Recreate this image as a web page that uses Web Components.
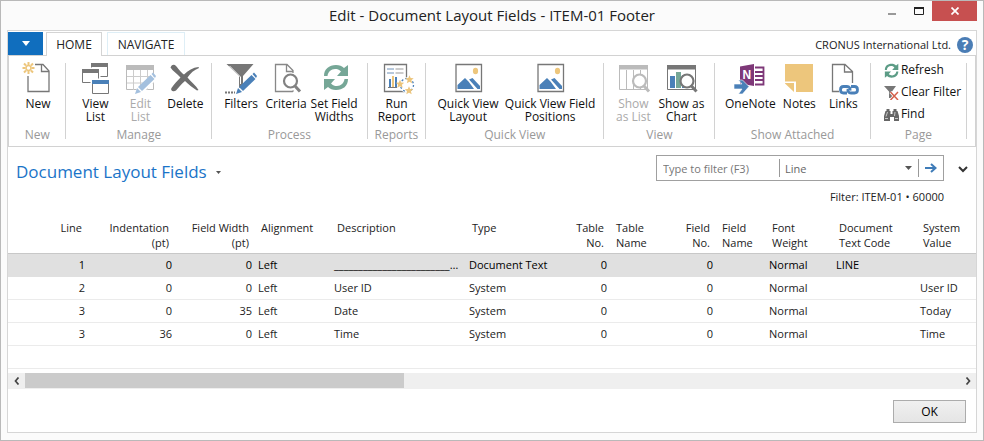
<!DOCTYPE html>
<html lang="en">
<head>
<meta charset="utf-8">
<title>Edit - Document Layout Fields - ITEM-01 Footer</title>
<style>
html, body { height: 100%; margin: 0; }
body { font: 11px/13px "Open Sans", "Noto Sans", sans-serif; color: #222; background: #fbfbfb; }
</style>
</head>
<body>
<app-window caption="Edit - Document Layout Fields - ITEM-01 Footer">
  <tab-strip company="CRONUS International Ltd."></tab-strip>
  <ribbon-bar>
    <ribbon-group label="New" style="--share:57">
      <ribbon-button icon="new" style="--w:48px">New</ribbon-button>
    </ribbon-group>
    <ribbon-group label="Manage" style="--share:146">
      <ribbon-button icon="view" style="--w:48px">View<br>List</ribbon-button>
      <ribbon-button icon="edit" disabled style="--w:42px">Edit<br>List</ribbon-button>
      <ribbon-button icon="delete" style="--w:48px">Delete</ribbon-button>
    </ribbon-group>
    <ribbon-group label="Process" style="--share:156">
      <ribbon-button icon="filters" style="--w:48px">Filters</ribbon-button>
      <ribbon-button icon="criteria" style="--w:42px">Criteria</ribbon-button>
      <ribbon-button icon="cycle" style="--w:54px">Set Field<br>Widths</ribbon-button>
    </ribbon-group>
    <ribbon-group label="Reports" style="--share:58">
      <ribbon-button icon="report" style="--w:48px">Run<br>Report</ribbon-button>
    </ribbon-group>
    <ribbon-group label="Quick View" style="--share:179">
      <ribbon-button icon="picture" style="--w:74px">Quick View<br>Layout</ribbon-button>
      <ribbon-button icon="picture" style="--w:90px">Quick View Field<br>Positions</ribbon-button>
    </ribbon-group>
    <ribbon-group label="View" style="--share:111">
      <ribbon-button icon="showlist" disabled style="--w:48px">Show<br>as List</ribbon-button>
      <ribbon-button icon="showchart" style="--w:48px">Show as<br>Chart</ribbon-button>
    </ribbon-group>
    <ribbon-group label="Show Attached" style="--share:156">
      <ribbon-button icon="onenote" style="--w:60px">OneNote</ribbon-button>
      <ribbon-button icon="notes" style="--w:38px">Notes</ribbon-button>
      <ribbon-button icon="links" style="--w:50px">Links</ribbon-button>
    </ribbon-group>
    <ribbon-group label="Page" stacked style="--share:96">
      <ribbon-link icon="refresh">Refresh</ribbon-link>
      <ribbon-link icon="clear">Clear Filter</ribbon-link>
      <ribbon-link icon="find">Find</ribbon-link>
    </ribbon-group>
  </ribbon-bar>
  <page-header heading="Document Layout Fields" filter="Filter: ITEM-01 • 60000"></page-header>
  <data-grid></data-grid>
  <scroll-track></scroll-track>
  <dialog-actions>OK</dialog-actions>
</app-window>

<script>
const PENCIL = (c) => `<path d="M11 33l2-6 4 4z" fill="${c}"/><path d="M14 26L26.500 14l4 4L18 30z" fill="${c}"/><path d="M27.500 13l1.500-1.500 3 3.500-1 2z" fill="${c}"/>`;
const LENS = (x, c) => `<circle cx="${x}" cy="20" r="6.500" fill="#fff" stroke="${c}" stroke-width="2.200"/><path d="M${x + 4.5} 25l5 5.500" stroke="${c}" stroke-width="3"/>`;
const CYCLE = `<path d="M6 15C6 8 11 4 18 4c3.500 0 6 1 8 3l4-3v11H19l4-4.500c-2-2-3.500-2.500-6-2.500-4 0-7 3-7.500 7z"/><path d="M30 18c0 7-5 11-12 11-3.500 0-6-1-8-3l-4 3V18h11l-4 4.500c2 2 3.500 2.500 6 2.500 4 0 7-3 7.500-7z"/>`;
const STAR = (x, y) => `<path transform="translate(${x} ${y})" d="M0-4.200l1.200 2.800 3 .2-2.300 2 .8 3L0 2.200l-2.700 1.600.8-3-2.300-2 3-.2z" fill="#ecc57c"/>`;
const ICONS = {
  new: `<path d="M13 3.500h8l6 6.500v20.500H6V15" fill="none" stroke="#777" stroke-width="1.300"/><path d="M19.500 4v6.500H27" fill="none" stroke="#777" stroke-width="1.300"/><g stroke="#edc67c" stroke-width="2"><path d="M6.500 1v3M6.500 10v3M.500 7h3M9.500 7h3M2 2.500l2 2M11 2.500l-2 2M2 11.500l2-2M11 11.500l-2-2"/></g><circle cx="6.500" cy="7" r="2.500" fill="#fff" stroke="#edc67c" stroke-width="1.500"/>`,
  view: `<g fill="#fff" stroke="#777"><path d="M12.500 2.500h16v13h-16z"/><path d="M3.500 8.500h16v13h-16z" stroke="#fff" stroke-width="4"/><path d="M3.500 8.500h16v13h-16z"/><path d="M13.500 19.500h16v13h-16z" stroke="#fff" stroke-width="4"/><path d="M13.500 19.500h16v13h-16z"/></g><path d="M12 2h17v4H12zM3 8h17v4H3z" fill="#777"/><path d="M13 19h17v4H13z" fill="#4a80b8"/>`,
  edit: `<path d="M2.500 4.500h27v24h-27z" fill="#fff" stroke="#bbb"/><path d="M2 4h28v5H2z" fill="#bbb"/><path d="M3 15.500h27M3 22h27M9.500 9v20M16.500 9v20M23.500 9v20" stroke="#ccc"/><path d="M14 32L30 16" stroke="#fff" stroke-width="7"/>${PENCIL('#a4c0de')}`,
  delete: `<path d="M1.500 6.500c1.500-3.500 4-3 5.500-1.500 3 3.500 6 7.500 8 8.500 4-4 9-7 14.500-7.500l.5 1C25 9 21.500 12 18.500 16.500c3.500 4.500 8.500 8 11 12.500l-1.500.5c-4.500-3-8.500-6-12-9.500-3.500 3-6.500 6.500-9 9.500-2.500 2-6 0-4.500-2.500 2.500-3.500 6-7.500 9-10.500C8 12.500 3.500 10 1.500 6.500z" fill="#6e6e6e"/>`,
  filters: `<path d="M1.500 3h27L18 15v9l-4 3V15z" fill="#777"/><path d="M4.500 5l11 11v7" fill="none" stroke="#fff"/><path d="M0 31.500h10" stroke="#777" stroke-width="2" stroke-dasharray="2 1"/><path d="M14 32L31 15" stroke="#fff" stroke-width="6"/>${PENCIL('#4a80b8')}`,
  criteria: `<path d="M23 12V9.500l-6-6H5.500v27h17l1-1M16.500 4v6.500h6" fill="none" stroke="#888" stroke-width="1.300"/>${LENS(20.5, '#828282')}`,
  cycle: `<g fill="#76a797">${CYCLE}</g>`,
  report: `<path d="M3.500 3.500h22v27h-22z" fill="#fff" stroke="#777" stroke-width="1.300"/><path d="M6 8h7M6 12h7" stroke="#6e91b8"/><path d="M14.500 8h8M14.500 12h8" stroke="#999"/><path d="M7 26.500h9" stroke="#777"/><path d="M8 18h2v8H8zM14 16h2v10h-2z" fill="#4a80b8"/><path d="M11 15h2v11h-2z" fill="#edc67c"/><circle cx="26.500" cy="24" r="8" fill="#fff"/><circle cx="26" cy="24" r="6.500" fill="none" stroke="#4a80b8" stroke-width="1.300" stroke-dasharray="2 2"/>${STAR(28.5, 18.5)}${STAR(19, 23)}${STAR(28, 29.5)}`,
  picture: `<path d="M4 3.500h25.500v27H4z" fill="#fff" stroke="#777" stroke-width="1.300"/><ellipse cx="23.500" cy="10" rx="2.600" ry="3.300" fill="#edc67c"/><path d="M5.500 28v-4l7.500-7 3.500 3.500L22 28zM17 18.500l3.500-1.500 7.500 8v3h-2.500z" fill="#4a80b8"/>`,
  showlist: `<path d="M2.500 4.500h28v24h-28z" fill="#fff" stroke="#bbb"/><path d="M2 4h29v4.500H2z" fill="#bbb"/><path d="M9.500 9v19M16.500 9v19M23.500 9v19" stroke="#bbb"/>${LENS(22.5, '#bbb')}`,
  showchart: `<path d="M2.500 4.500h28v24h-28z" fill="#fff" stroke="#777"/><path d="M2 4h29v4.500H2z" fill="#777"/><path d="M5 15h5v12H5z" fill="#4a80b8"/><path d="M11 11h5v16h-5z" fill="#76a797"/><path d="M17 14h5v13h-5z" fill="#4a80b8"/>${LENS(22, '#777')}`,
  onenote: `<path d="M6 5.500L20 3v22l-14-2.500z" fill="#7e3878"/><path d="M21 6.500h8.500v17H21M21 11h8M21 15h8M21 19h8" fill="none" stroke="#7e3878" stroke-width="1.800"/><text x="8.500" y="18" font-family="Liberation Sans,sans-serif" font-weight="700" font-size="12" fill="#fff">N</text><path d="M0 23h8l-3.500-4h4L15 25.500 8.500 33h-4L8 28H0z" fill="#4a80b8" stroke="#fff" stroke-width=".6"/>`,
  notes: `<path d="M2 3h28v28H13V20.500H2zM2 22.500L11 31V22H2z" fill="#edc67c"/>`,
  links: `<path d="M12 30.500H5.500v-27H18l7.500 7V22M17.500 4v7H25" fill="none" stroke="#777" stroke-width="1.300"/><g fill="none" stroke="#4a80b8" stroke-width="2.800"><path d="M20 32h-3.500c-4 0-4-6.500 0-6.500H20c2.500 0 3.500 2 3 4"/><path d="M24 25.500h3.500c4 0 4 6.500 0 6.500H24c-2.500 0-3.500-2-3-4"/></g>`,
  refresh: `<g fill="#5c9c86" transform="translate(-2.500 -1.500) scale(.56)">${CYCLE}</g>`,
  clear: `<path d="M0 1h12L8 6.500V13H5V6.500z" fill="#777"/><path d="M6.500 7l7.500 8M14 7l-7.500 8" stroke="#fff" stroke-width="3"/><path d="M6.500 7l7.500 8M14 7l-7.500 8" stroke="#d4604a" stroke-width="1.500"/>`,
  find: `<path d="M2.500 2h3v2h1v3h2V4h1V2h3v2h1l1.500 5v5h-5v-4H6v4H0V9l1.500-5h1z" fill="#666"/><path d="M3.500 5L2 9.500M11 5L10.500 9M1 11.500h3M11 11.500h3" stroke="#ddd" stroke-width=".8"/>`
};
const define = (name, html, setup) => customElements.define(name, class extends HTMLElement {
  constructor() {
    super();
    const t = document.createElement('template');
    t.innerHTML = '<style>:host,*{box-sizing:border-box}button,input,select{font:inherit;color:inherit;border:0;padding:0;margin:0;background:none;border-radius:0}</style>' + html;
    this.attachShadow({ mode: 'open' }).append(t.content.cloneNode(true));
  }
  connectedCallback() {
    for (const el of this.shadowRoot.querySelectorAll('[data-attr]')) el.textContent = this.getAttribute(el.dataset.attr);
    if (setup) setup(this, this.shadowRoot);
  }
});

define('app-window', `<style>
:host{display:flex;flex-direction:column;min-height:100vh;border:1px solid #b9b9b9;padding:0 6px 7px;background:#fbfbfb}
header{display:grid;grid-template-columns:1fr auto 1fr;height:29px}
h1{grid-column:2;margin:0;font-size:15px;font-weight:400;line-height:28px;white-space:nowrap}
.controls{display:flex;justify-content:flex-end;align-items:flex-start}
.controls button{width:27px;height:20px;display:grid;place-items:center}
.controls .close{width:45px;background:#c75050}
main{flex:1;display:flex;flex-direction:column;background:#fff;border:1px solid #d6d6d6}
</style><header><h1 data-attr="caption"></h1><div class="controls">
<button aria-label="Minimize"><svg width="10" height="10"><path d="M1 8h8" stroke="#999" stroke-width="2"/></svg></button>
<button aria-label="Maximize"><svg width="10" height="8"><path d="M.500 1h9v6.500h-9z" fill="none" stroke="#222"/><path d="M0 1h10" stroke="#222" stroke-width="2"/></svg></button>
<button class="close" aria-label="Close"><svg width="8" height="8"><path d="M.500.500l7 7M7.500.500l-7 7" stroke="#fff" stroke-width="1.700"/></svg></button>
</div></header><main><slot></slot></main>`);

define('tab-strip', `<style>
:host{display:flex;align-items:flex-end;height:24px;color:#222}
button{height:23px;border:1px solid #d4d4d4;border-bottom:0;background:#fff;line-height:24px;text-align:center;font-size:12px}
.app{width:35px;margin-right:3px;background:#106ebe;border:0;display:grid;place-items:center}
.home{width:56px;height:24px;margin-bottom:-1px;z-index:1}
.nav{width:78px;margin-left:5px;border-color:#deeef6}
.company{margin-left:auto;line-height:20px;padding-right:6px}
.help{width:16px;height:20px;border:0;margin-right:3px;display:block;background:none}
.help svg{display:block;overflow:visible}
</style><button class="app" aria-label="Application menu"><svg width="8" height="5"><path d="M0 0h8L4 5z" fill="#fff"/></svg></button>
<button class="home">HOME</button><button class="nav">NAVIGATE</button><span class="company" data-attr="company"></span>
<button class="help" aria-label="Help"><svg width="16" height="16"><circle cx="8" cy="8" r="8" fill="#4a7db5"/><text x="8" y="13" text-anchor="middle" font-family="Open Sans,sans-serif" font-size="14" font-weight="700" fill="#fff">?</text></svg></button>`);

define('ribbon-bar', `<style>:host{display:flex;border:1px solid #d2d2d2;height:92px;padding:7px 8px 7px 0}</style><slot></slot>`);

define('ribbon-group', `<style>
:host{flex:var(--share) 1 0;min-width:0;display:flex;flex-direction:column;border-right:1px solid #d2d2d2}
.items{display:flex;flex:1;min-height:0;padding-left:5px}
:host([stacked]) .items{flex-direction:column;padding-left:13px;margin-top:-3px}
.label{text-align:center;color:#999;line-height:9px;white-space:nowrap;font-size:12px}
</style><div class="items"><slot></slot></div><div class="label" data-attr="label"></div>`);

define('ribbon-button', `<style>
:host{display:block;width:var(--w);color:#111;font-size:12px;margin-top:-2px}
:host([disabled]){color:#aaa}
button{width:100%;display:flex;flex-direction:column;align-items:center;line-height:13px;white-space:nowrap;text-align:center}
svg{display:block;overflow:visible;margin-bottom:2px}
</style><button><svg width="32" height="34" aria-hidden="true"></svg><span><slot></slot></span></button>`, (host, root) => {
  root.querySelector('svg').innerHTML = ICONS[host.getAttribute('icon')];
  root.querySelector('button').disabled = host.hasAttribute('disabled');
});

define('ribbon-link', `<style>
:host{display:block;flex:0 0 22px;color:#111;font-size:12px}
button{display:flex;align-items:center;gap:2px;line-height:20px;white-space:nowrap}
</style><button><svg width="15" height="15" aria-hidden="true"></svg><span><slot></slot></span></button>`, (host, root) => {
  root.querySelector('svg').innerHTML = ICONS[host.getAttribute('icon')];
});

define('page-header', `<style>
:host{display:block;padding:2px 8px 0}
.top{display:flex;align-items:center;justify-content:space-between}
.title{display:flex;align-items:center;gap:9px;padding-top:8px}
h2{margin:0;font-size:17px;line-height:30px;font-weight:400;color:#1a74c8;white-space:nowrap}
.title svg{display:block}
.right{display:flex;align-items:center;gap:14px;color:#666}
form{display:flex;align-items:center;width:288px;height:26px;border:1px solid #a0a0a0}
input{width:122px;padding-left:6px;height:20px;outline:0}
input::placeholder{color:#777;opacity:1}
.pick{flex:1;display:grid;align-items:center;border:solid #999;border-width:0 1px;height:18px}
.pick>*{grid-area:1/1}
.pick svg{justify-self:end;margin-right:6px;pointer-events:none}
select{appearance:none;width:100%;padding-left:5px}
.go{width:24px;display:grid;place-items:center}
.more{width:10px;height:20px}
p{margin:2px 24px 0 0;text-align:right;line-height:16px}
</style><div class="top"><div class="title"><h2 data-attr="heading"></h2><button aria-label="Page menu"><svg width="5" height="3"><path d="M0 0h5L2.500 3z" fill="#555"/></svg></button></div>
<div class="right"><form onsubmit="return false"><input aria-label="Type to filter" placeholder="Type to filter (F3)"><div class="pick"><select aria-label="Filter column"><option>Line</option></select><svg width="7" height="4"><path d="M0 0h7L3.500 4z" fill="#555"/></svg></div>
<button class="go" aria-label="Apply filter"><svg width="12" height="10"><path d="M0 5h10M6 1l4.500 4L6 9" fill="none" stroke="#3f7cb8" stroke-width="2"/></svg></button></form>
<button class="more" aria-label="Expand filter"><svg width="10" height="7"><path d="M1 1l4 4 4-4" fill="none" stroke="#333" stroke-width="2"/></svg></button></div></div>
<p data-attr="filter"></p>`);

define('data-grid', `<style>
:host{display:block;margin-top:15px}
table{width:100%;table-layout:fixed;border-collapse:collapse}
th{font-weight:400;text-align:left;vertical-align:top;height:33px;padding:0 6px;line-height:15px;border-bottom:1px solid #c8c8c8;white-space:nowrap}
td{height:23px;padding:0 3px;border-bottom:1px solid #ebebeb;white-space:nowrap}
.n{text-align:right}
tbody tr:first-child{background:#e0e0e0;color:#000}
tbody tr:first-child td{border-color:#e0e0e0}
.cut{overflow:hidden;text-overflow:ellipsis;padding-right:6px}
</style><table><colgroup></colgroup><thead><tr></tr></thead><tbody></tbody></table>`, (host, root) => {
  const cols = [['Line', 80, 1], ['Indentation<br>(pt)', 87, 1], ['Field Width<br>(pt)', 80, 1], ['Alignment', 76], ['Description', 135], ['Type', 90], ['Table<br>No.', 54, 1], ['Table<br>Name', 67], ['Field<br>No.', 39, 1], ['Field<br>Name', 50], ['Font<br>Weight', 67], ['Document<br>Text Code', 84], ['System<br>Value', 59]];
  const rows = [
    ['1', '0', '0', 'Left', '_'.repeat(30), 'Document Text', '0', '', '0', '', 'Normal', 'LINE', ''],
    ['2', '0', '0', 'Left', 'User ID', 'System', '0', '', '0', '', 'Normal', '', 'User ID'],
    ['3', '0', '35', 'Left', 'Date', 'System', '0', '', '0', '', 'Normal', '', 'Today'],
    ['3', '36', '0', 'Left', 'Time', 'System', '0', '', '0', '', 'Normal', '', 'Time'],
    cols.map(() => '')];
  const cls = (i) => cols[i][2] ? 'n' : i === 4 ? 'cut' : '';
  root.querySelector('colgroup').innerHTML = cols.map(c => `<col style="width:${c[1]}px">`).join('');
  root.querySelector('thead tr').innerHTML = cols.map(c => `<th scope="col" class="${c[2] ? 'n' : ''}">${c[0]}</th>`).join('');
  root.querySelector('tbody').innerHTML = rows.map(r => '<tr>' + r.map((v, i) => `<td class="${cls(i)}">${v}</td>`).join('') + '</tr>').join('');
});

define('scroll-track', `<style>
:host{display:flex;height:16px;margin-top:4px;background:#efefef}
button{width:17px;display:grid;place-items:center}
.rail{flex:1;display:flex}
.thumb{width:calc(100% * 65 / 160);height:15px;background:#cbcbcb}
</style><button aria-label="Scroll left"><svg width="6" height="8"><path d="M4.500.500L1.500 4l3 3.500" fill="none" stroke="#444" stroke-width="1.700"/></svg></button><div class="rail"><div class="thumb"></div></div>
<button aria-label="Scroll right"><svg width="6" height="8"><path d="M1.500.500l3 3.500-3 3.500" fill="none" stroke="#444" stroke-width="1.700"/></svg></button>`);

define('dialog-actions', `<style>
:host{display:flex;justify-content:flex-end;padding:11px 10px 8px}
button{width:73px;height:23px;border:1px solid #acacac;background:linear-gradient(#f0f0f0,#e5e5e5);font-size:12px;color:#000}
</style><button><slot></slot></button>`);
</script>
</body>
</html>
